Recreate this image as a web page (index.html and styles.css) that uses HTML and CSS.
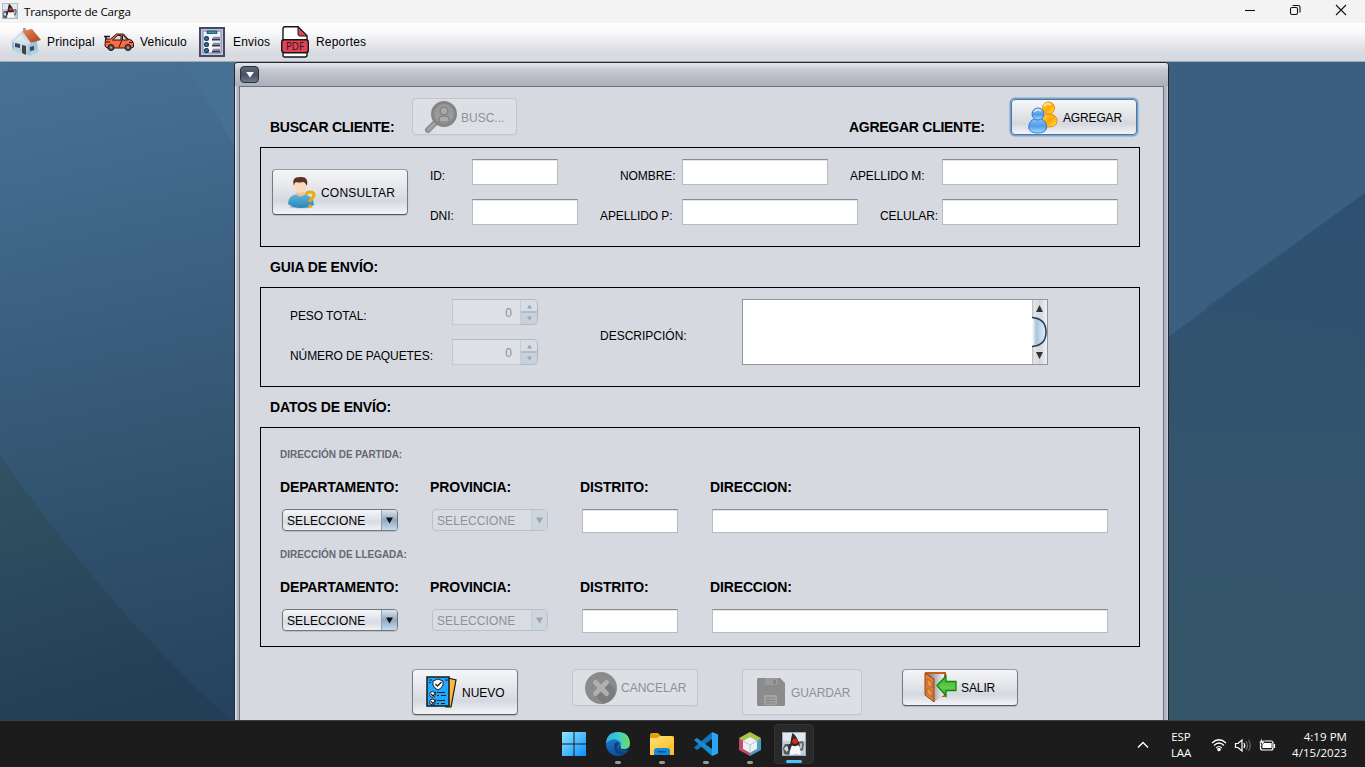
FILE: index.html
```html
<!DOCTYPE html>
<html lang="es">
<head>
<meta charset="utf-8">
<title>Transporte de Carga</title>
<link rel="stylesheet" href="styles.css">
</head>
<body>
<svg class="defs" width="0" height="0" aria-hidden="true">
  <defs>
    <linearGradient id="roof" x1="0" y1="0" x2="1" y2="1"><stop offset="0" stop-color="#e58a55"/><stop offset="1" stop-color="#a8431c"/></linearGradient>
    <linearGradient id="wall" x1="0" y1="0" x2="0" y2="1"><stop offset="0" stop-color="#f4f9fc"/><stop offset="1" stop-color="#9fc3dc"/></linearGradient>
    <linearGradient id="blueBody" x1="0" y1="0" x2="0" y2="1"><stop offset="0" stop-color="#8cc4f8"/><stop offset=".55" stop-color="#4f9ceb"/><stop offset="1" stop-color="#a5e0ff"/></linearGradient>
    <linearGradient id="goldBody" x1="0" y1="0" x2="1" y2="1"><stop offset="0" stop-color="#ffe04a"/><stop offset=".5" stop-color="#ffa800"/><stop offset="1" stop-color="#ffe35c"/></linearGradient>
    <linearGradient id="shirt" x1="0" y1="0" x2="0" y2="1"><stop offset="0" stop-color="#5fb4dc"/><stop offset="1" stop-color="#2b87b8"/></linearGradient>
    <linearGradient id="win" gradientUnits="userSpaceOnUse" x1="0" y1="0" x2="24" y2="24"><stop offset="0" stop-color="#8fe6ff"/><stop offset="1" stop-color="#0a8fff"/></linearGradient>
    <linearGradient id="edgeTop" x1="0" y1="0" x2="1" y2="0"><stop offset="0" stop-color="#2faee0"/><stop offset=".5" stop-color="#3fc9d0"/><stop offset="1" stop-color="#6fe05a"/></linearGradient>
    <linearGradient id="edgeLow" x1="0" y1="0" x2="0" y2="1"><stop offset="0" stop-color="#1c8ad8"/><stop offset="1" stop-color="#0c4fa3"/></linearGradient>
    <linearGradient id="folder" x1="0" y1="0" x2="1" y2="1"><stop offset="0" stop-color="#ffe07a"/><stop offset="1" stop-color="#fdbb1c"/></linearGradient>
    <linearGradient id="leaf" x1="0" y1="0" x2="0" y2="1"><stop offset="0" stop-color="#3fae2a"/><stop offset=".6" stop-color="#5fcf50"/><stop offset="1" stop-color="#2b9a1c"/></linearGradient>
    <linearGradient id="doorway" x1="0" y1="0" x2="1" y2="0"><stop offset="0" stop-color="#777"/><stop offset="1" stop-color="#f5f5f5"/></linearGradient>
    <symbol id="duke" viewBox="0 0 24 24">
      <rect width="24" height="24" fill="#c3ced9"/><path d="M0 0h24v9H0z" fill="#e2e8ee"/>
      <path d="M1 16l2-4 5 0 2-1v10l-4 2-4-1z" fill="#55595d"/><path d="M2 17l2-3 3 2-2 4z" fill="#d6dbdd"/>
      <path d="M16 10l5-1 1 3-1 6-4 2z" fill="#61666a"/><path d="M17 12l3-1v5l-3 1z" fill="#b9c1c6"/>
      <path d="M10.500 1c1.500 1 5.500 5 6.500 10l1 3-3 1H9l-1-2c1-4 1-8 2.500-12z" fill="#25292b"/>
      <path d="M9 13c2 1.500 5.500 1.500 7.500 0l2.500 7-1 3-4-1.500-4.500 1.500-2-1z" fill="#f8f8f8"/>
      <path d="M7 12l3 1-2 5-2-1z" fill="#2b2f31"/>
      <circle cx="13" cy="9.300" r="2.700" fill="#e7211b"/>
      <rect x=".5" y=".5" width="23" height="23" fill="none" stroke="#9aacbd"/>
    </symbol>
  </defs>
</svg>

<header class="titlebar">
  <svg class="titlebar-icon" width="16" height="16"><use href="#duke"/></svg>
  <span class="titlebar-text">Transporte de Carga</span>
  <svg class="window-controls" width="110" height="12" viewBox="0 0 110 12" fill="none" stroke="#111" stroke-width="1.100">
    <path d="M4 6.500h10"/>
    <rect x="49.500" y="3.500" width="7" height="7" rx="1.500"/><path d="M51.500 1.500h5.500a2 2 0 0 1 2 2v5"/>
    <path d="M95 1l10 10M105 1L95 11"/>
  </svg>
</header>

<nav class="menubar">
  <a class="menu menu-home">
    <svg width="32" height="30" viewBox="0 0 32 30">
      <path d="M13 1h3v6h-3z" fill="#8fa3b5"/>
      <path d="M2 14L12 6l7 11v11L4 22z" fill="url(#wall)"/>
      <path d="M18 16l9-3 1 12-9 4z" fill="#9cc3dc"/>
      <path d="M2 13l2 1v8l-2-1z" fill="#9cb8ca"/>
      <path d="M12 4l10-2 9 11-11 3z" fill="url(#roof)"/>
      <path d="M12 4L0 15l2 1 9-8 8 10 2-2z" fill="#cfdde8"/>
      <path d="M5 16l5 1v4l-5-1zM20 20l4-1v4l-4 1z" fill="#36485a"/><path d="M12 18l4 1v9l-4-2z" fill="#4d3d3a"/>
      <path d="M20 28l9-4v-2l-9 4zM2 23l9 4v-2l-9-4z" fill="#a9dcd9"/>
    </svg>Principal</a>
  <a class="menu menu-car">
    <svg width="30" height="20" viewBox="0 0 30 20" stroke="#1b1516" stroke-width="1">
      <path d="M1.500 7h5l6-5h7l4.500 5 4 1.500 1.500 3V15l-2 1H3l-2-2z" fill="#ff6a40"/><path d="M0 4.500h6M2 4.500V7" stroke-width="1.600"/>
      <path d="M8.500 8l5-4.500H17V8zM18.500 3.500h1l4 4.500h-5z" fill="#dcd8d8"/><path d="M18 8l-3 7M2 10h4M25 10.500h4" fill="none"/>
      <circle cx="7" cy="15.500" r="3" fill="#555"/><circle cx="24" cy="15.500" r="3" fill="#555"/><circle cx="7" cy="15.500" r="1" fill="#aaa" stroke="none"/><circle cx="24" cy="15.500" r="1" fill="#aaa" stroke="none"/>
    </svg>Vehiculo</a>
  <a class="menu menu-list">
    <svg width="26" height="30" viewBox="0 0 26 30">
      <rect x="1" y="1" width="24" height="28" fill="#c3c9de" stroke="#454862" stroke-width="2"/><rect x="4" y="4" width="18" height="22" fill="#f3f5fc" stroke="#7b80a0"/>
      <path d="M8 4h10v2.500H8z" fill="#16a4b4" stroke="#353750" stroke-width=".8"/>
      <g fill="#149cab" stroke="#252843" stroke-width="1.200"><circle cx="7.500" cy="11.500" r="1.900"/><circle cx="7.500" cy="17.500" r="1.900"/><circle cx="7.500" cy="23.500" r="1.900"/></g>
      <path d="M14 10.500h7M14 16.500h7M14 22.500h7" stroke="#858aa3" stroke-width="1.600"/><path d="M13 12.500h8M13 18.500h8M13 24.500h8" stroke="#35374f" stroke-width="1.800"/>
    </svg>Envios</a>
  <a class="menu menu-pdf">
    <svg width="28" height="32" viewBox="0 0 28 32">
      <path d="M4 .7h13l9 9V29q0 2-2 2H4q-2 0-2-2V3Q2 .7 4 .7z" fill="#fff" stroke="#161616" stroke-width="1.400"/>
      <path d="M17 1v7q0 2 2 2h7z" fill="#e04353" stroke="#161616"/>
      <rect x=".7" y="13.700" width="26.600" height="13" rx="2.500" fill="#e04353" stroke="#161616" stroke-width="1.400"/>
      <text x="14" y="24" text-anchor="middle" textLength="18" lengthAdjust="spacingAndGlyphs" class="pdf-label">PDF</text>
    </svg>Reportes</a>
</nav>

<main class="desktop">
  <svg class="wallpaper" width="1365" height="658" viewBox="0 62 1365 658" preserveAspectRatio="none">
    <defs>
      <linearGradient id="wl" gradientUnits="userSpaceOnUse" x1="40" y1="50" x2="190" y2="735"><stop offset="0" stop-color="#487295"/><stop offset=".18" stop-color="#426a8c"/><stop offset=".4" stop-color="#3a5e7e"/><stop offset=".6" stop-color="#325571"/><stop offset="1" stop-color="#25415d"/></linearGradient>
      <linearGradient id="wd" gradientUnits="userSpaceOnUse" x1="0" y1="455" x2="80" y2="720"><stop offset="0" stop-color="#325363"/><stop offset="1" stop-color="#233e55"/></linearGradient>
      <linearGradient id="wr" x1="0" y1="0" x2="0" y2="1"><stop offset="0" stop-color="#305271"/><stop offset="1" stop-color="#365669"/></linearGradient>
    </defs>
    <rect y="62" width="700" height="658" fill="url(#wl)"/>
    <path d="M184 62h60v100z" fill="#477194"/>
    <path d="M0 455Q100 600 230 720H0z" fill="url(#wd)"/>
    <rect x="700" y="62" width="665" height="658" fill="#3a5f81"/>
    <path d="M1160 343L1365 193V720H1160z" fill="url(#wr)"/>
    <path d="M1205 308Q1280 320 1365 336V193z" fill="#2f5272" opacity=".6"/>
    <path d="M1168 570Q1270 585 1365 607V720H1168z" fill="#365669" opacity=".6"/>
  </svg>

  <section class="frame">
    <div class="frame-title"><button class="frame-menu"><svg width="8" height="6"><path d="M0 0h8L4 5.500z" fill="#fff"/></svg></button></div>
    <div class="form">
      <div class="client-head">
        <h2 class="heading">BUSCAR CLIENTE:</h2>
        <button class="btn btn-search" disabled>
          <svg width="33" height="33" viewBox="0 0 33 33"><path d="M3 30l8-8" stroke="#8b8b8b" stroke-width="6" stroke-linecap="round"/><path d="M3 30l7-7" stroke="#a4a4a4" stroke-width="3" stroke-linecap="round"/><circle cx="19" cy="14" r="11.500" fill="#999" stroke="#858585" stroke-width="3"/><circle cx="19" cy="11" r="3.800" fill="#aaa" stroke="#7e7e7e" stroke-width="1.200"/><path d="M14 22v-3q0-3 5-3t5 3v3z" fill="#aaa" stroke="#7e7e7e" stroke-width="1.200"/></svg><span>BUSC...</span></button>
        <h2 class="heading heading-add">AGREGAR CLIENTE:</h2>
        <button class="btn btn-add">
          <svg width="31" height="33" viewBox="0 0 31 33"><g fill="url(#goldBody)" stroke="#ee9000"><path d="M13 23q0-9 7-10 9 0 9 7 0 6-9 6-6 0-7-3z"/><circle cx="20.500" cy="7" r="6"/></g><g fill="url(#blueBody)" stroke="#3978cc"><path d="M.7 27q0-9 9-10 9 1 9 10-1 5-9 5t-9-5z"/><circle cx="10" cy="13" r="6"/></g><path d="M16 5q3-4 7-1M6 11q3-4 7-1" fill="none" stroke="#fff" stroke-opacity=".6" stroke-width="2"/></svg><span>AGREGAR</span></button>
      </div>

      <div class="panel panel-client">
        <button class="btn btn-query">
          <svg width="29" height="33" viewBox="0 0 29 33"><ellipse cx="14" cy="31" rx="12" ry="1.500" fill="#b8bfc9"/><path d="M1 28q0-9 10-10h5q11 2 11 11-5 3-13 3T1 28z" fill="url(#shirt)"/><path d="M10 14h7v5q-4 3-7 0z" fill="#eebf9b"/><ellipse cx="13.500" cy="10" rx="5.700" ry="7" fill="#fbd9bd"/><path d="M7 10Q4 1 13 1q9-1 7 9-2-4-4-4-5 1-7 0-2 1-2 4z" fill="#593426"/><path d="M19 19q0-3 4-3 4 0 4 3 0 2-3 4-1 1-1 3" fill="none" stroke="#efaa0c" stroke-width="3"/><circle cx="23" cy="30" r="1.800" fill="#efaa0c"/></svg><span>CONSULTAR</span></button>
        <div class="client-fields">
          <div class="field-line">
            <label class="label w42">ID:</label><input class="input id-input">
            <label class="label w62 push62">NOMBRE:</label><input class="input name-input">
            <label class="label w92 push22">APELLIDO M:</label><input class="input long-input">
          </div>
          <div class="field-line">
            <label class="label w42">DNI:</label><input class="input dni-input">
            <label class="label w82 push22">APELLIDO P:</label><input class="input long-input">
            <label class="label w62 push22">CELULAR:</label><input class="input long-input">
          </div>
        </div>
      </div>

      <h2 class="heading section-heading">GUIA DE ENVÍO:</h2>
      <div class="panel panel-guide">
        <div class="guide-fields">
          <div class="field-line"><label class="label w162">PESO TOTAL:</label><div class="spinner"><span class="spin-value">0</span><span class="spin-buttons"><svg width="17" height="13"><path d="M6 8.500h5l-2.500-4z" fill="#9da4b1"/></svg><svg width="17" height="13"><path d="M6 3.500h5l-2.500 4z" fill="#9da4b1"/></svg></span></div></div>
          <div class="field-line"><label class="label w162">NÚMERO DE PAQUETES:</label><div class="spinner"><span class="spin-value">0</span><span class="spin-buttons"><svg width="17" height="13"><path d="M6 8.500h5l-2.500-4z" fill="#9da4b1"/></svg><svg width="17" height="13"><path d="M6 3.500h5l-2.500 4z" fill="#9da4b1"/></svg></span></div></div>
        </div>
        <label class="label desc-label">DESCRIPCIÓN:</label>
        <div class="textarea"><div class="scrollbar">
          <svg width="15" height="64" viewBox="0 0 15 64"><defs><linearGradient id="thumb"><stop offset="0" stop-color="#fff"/><stop offset=".3" stop-color="#a9c4dc"/><stop offset="1" stop-color="#e0f1ff"/></linearGradient></defs><path d="M4 12h7L7.500 5zM4 52h7L7.500 59z" fill="#333"/><path d="M0 17.500q14 1 14 14.500T0 46.500z" fill="url(#thumb)"/><path d="M0 17.500q14 1 14 14.500T0 46.500" fill="none" stroke="#263b52" stroke-width="1.500"/></svg>
        </div></div>
      </div>

      <h2 class="heading section-heading">DATOS DE ENVÍO:</h2>
      <div class="panel panel-address">
        <div class="address">
          <h3 class="caption">DIRECCIÓN DE PARTIDA:</h3>
          <div class="address-grid">
            <span class="heading">DEPARTAMENTO:</span><span class="heading">PROVINCIA:</span><span class="heading">DISTRITO:</span><span class="heading">DIRECCION:</span>
            <div class="combo"><span class="combo-text">SELECCIONE</span><span class="combo-arrow"><svg width="7" height="7"><path d="M0 .5h7l-3.500 6z"/></svg></span></div>
            <div class="combo combo-off"><span class="combo-text">SELECCIONE</span><span class="combo-arrow"><svg width="7" height="7"><path d="M0 .5h7l-3.500 6z"/></svg></span></div>
            <input class="input district-input"><input class="input street-input">
          </div>
        </div>
        <div class="address">
          <h3 class="caption">DIRECCIÓN DE LLEGADA:</h3>
          <div class="address-grid">
            <span class="heading">DEPARTAMENTO:</span><span class="heading">PROVINCIA:</span><span class="heading">DISTRITO:</span><span class="heading">DIRECCION:</span>
            <div class="combo"><span class="combo-text">SELECCIONE</span><span class="combo-arrow"><svg width="7" height="7"><path d="M0 .5h7l-3.500 6z"/></svg></span></div>
            <div class="combo combo-off"><span class="combo-text">SELECCIONE</span><span class="combo-arrow"><svg width="7" height="7"><path d="M0 .5h7l-3.500 6z"/></svg></span></div>
            <input class="input district-input"><input class="input street-input">
          </div>
        </div>
      </div>

      <div class="actions">
        <button class="btn btn-new">
          <svg width="31" height="32" viewBox="0 0 31 32"><path d="M22 2l8 2-5 27h-5z" fill="#fdb83d" stroke="#171717" stroke-width="1.200"/><path d="M1 1h22v29H1z" fill="#22a9fb" stroke="#121a20" stroke-width="1.500"/><path d="M12 3l5 2v4q-1 3-5 5-4-2-5-5V5z" fill="#fff" stroke="#16222c"/><path d="M9.500 8l2 2 4-4" fill="none" stroke="#16222c" stroke-width="1.300"/><g fill="#fff" stroke="#16222c"><circle cx="6.500" cy="18.500" r="2.800"/><circle cx="6.500" cy="26" r="2.800"/></g><path d="M5 18l2 2 3-4M5 25.500l2 2 3-4M11 16.500h8M11 19.500h2M15 19.500h5M11 24.500h8M11 27.500h2M15 27.500h4M3 4h3M3 6.500h2M19 4h3" fill="none" stroke="#16222c" stroke-width="1.200"/></svg><span>NUEVO</span></button>
        <button class="btn btn-cancel" disabled>
          <svg width="32" height="32" viewBox="0 0 32 32"><circle cx="16" cy="16" r="16" fill="#8b8b8b"/><path d="M22 9l9 9q-2 12-13 14l-8-9z" fill="#7c7c7c"/><path d="M10.500 10.500l11 11M21.500 10.500l-11 11" stroke="#b0b0b0" stroke-width="5" stroke-linecap="round"/></svg><span>CANCELAR</span></button>
        <button class="btn btn-save" disabled>
          <svg width="28" height="28" viewBox="0 0 28 28"><path d="M1 0h22l5 5v22l-1 1H1l-1-1V1z" fill="#8b8b8b"/><path d="M8 0h13v7H8z" fill="#999"/><path d="M16 2h3v4h-3z" fill="#858585"/><path d="M7 17h13v10H7z" fill="#a3a3a3"/><path d="M8.500 20h10M8.500 22.500h10M8.500 25h10M11 19v8" stroke="#888"/></svg><span>GUARDAR</span></button>
        <button class="btn btn-exit">
          <svg width="33" height="31" viewBox="0 0 33 31"><path d="M1 0h21v25h-6V3H1z" fill="#c75b1b"/><path d="M3 2h17v21l-10 7z" fill="url(#doorway)"/><path d="M1 1l9 6v23l-9-7z" fill="#df8038" stroke="#94400e"/><path d="M3 7l5 3v6l-5-3zM3 16l5 3v6l-5-4z" fill="#e99450" stroke="#ae551c" stroke-width=".7"/><path d="M13 13.500L22 4v5.500h10v9H22V24z" fill="url(#leaf)" stroke="#16870c" stroke-width="1.300"/></svg><span>SALIR</span></button>
      </div>
    </div>
  </section>
</main>

<footer class="taskbar">
  <div class="apps">
    <span class="app"><svg width="24" height="24"><path d="M0 0h11.500v11.500H0zM12.500 0H24v11.500H12.500zM0 12.500h11.500V24H0zM12.500 12.500H24V24H12.500z" fill="url(#win)"/></svg></span>
    <span class="app running"><svg width="24" height="24" viewBox="0 0 24 24"><circle cx="12" cy="12" r="12" fill="url(#edgeLow)"/><path d="M0 11Q1 0 12 0q11 0 12 11 0 6-7 6-4 0-3-3 2-2 0-4-5-6-14 1z" fill="url(#edgeTop)"/><path d="M8 13q-1 9 8 10 4-1 6-4-5 2-9-1-3-2-1-5 2-1 1-2-4-2-5 2z" fill="#123f80"/><path d="M15 14q-2 3 2 3.500 5 1 7-3v3q-5 2-9 0-3-1-1-3.500z" fill="#1c1c1c"/></svg></span>
    <span class="app running"><svg width="24" height="24" viewBox="0 0 24 24"><path d="M0 3q0-2 2-2h6l3 3h11q2 0 2 2v6H0z" fill="#e3a008"/><path d="M0 6h7l3-2h12q2 0 2 2v17H0z" fill="url(#folder)"/><path d="M4 23v-4q0-3 3-3h10q3 0 3 3v4z" fill="#1687d9"/><path d="M8 19h8v1.500H8z" fill="#0a5296"/></svg></span>
    <span class="app running"><svg width="24" height="24" viewBox="0 0 24 24"><path d="M18 0l6 2.500v19L18 24z" fill="#2aa7f2"/><path d="M18 0v7L3 18l-3-2.500z" fill="#1473bd"/><path d="M0 8l3-2 15 11v7z" fill="#198bd4"/></svg></span>
    <span class="app running"><svg width="22" height="24" viewBox="0 0 22 24"><path d="M11 0l11 6-3 4-8-4-8 4-3-4z" fill="#a8c34a"/><path d="M0 6l4 3v8l7 4v3L0 18z" fill="#c44a6a"/><path d="M22 6l-4 3v8l-7 4v3l11-6z" fill="#5199c6"/><path d="M11 5l7 4v8l-7 4-7-4V9z" fill="#eaf1f3"/><path d="M4 9l7 4 7-4M11 13v8" fill="none" stroke="#b8c5c9"/></svg></span>
    <span class="app active"><svg width="24" height="24"><use href="#duke"/></svg></span>
  </div>
  <div class="tray">
    <svg class="tray-up" width="12" height="8" fill="none" stroke="#fff" stroke-width="1.400"><path d="M1 6.500l5-5 5 5"/></svg>
    <div class="lang">ESP<br>LAA</div>
    <svg class="tray-icons" width="66" height="16" viewBox="0 0 66 16" fill="none" stroke="#fff" stroke-width="1.200">
      <path d="M1 6q7-6.500 14 0M3 8.500q5-5 10 0M5.200 11q2.800-3 5.600 0"/><circle cx="8" cy="12.500" r="1.200" fill="#fff"/>
      <path d="M24.500 6.500h2.500l4-3.500v11l-4-3.500h-2.500z"/><path d="M33 6q1.500 2.500 0 5"/><path d="M35 4q3 4.500 0 9M37.500 3q3.500 5.500 0 11" stroke="#666"/>
      <rect x="49.500" y="4" width="12.500" height="9" rx="2"/><path d="M52 6.500h8v4h-8z" fill="#fff"/><path d="M63.500 7v4"/><path d="M51 1l-3 5h3l-1 4 4-6h-3z" fill="#fff" stroke="#1c1c1c" stroke-width=".5"/>
    </svg>
    <div class="clock">4:19 PM<br>4/15/2023</div>
  </div>
</footer>
</body>
</html>
```

FILE: styles.css
```css
* { box-sizing: border-box; }
body { margin: 0; width: 1365px; height: 767px; overflow: hidden; display: flex; flex-direction: column; font: 12px "Liberation Sans", Arial, sans-serif; color: #000; }
svg { display: block; flex: none; }
.defs { position: absolute; }
h2, h3 { margin: 0; }

.titlebar { height: 23px; flex: none; background: #f3f3f3; display: flex; align-items: center; padding: 0 14px 1px 2px; }
.titlebar-text { margin-left: 6px; font: 11.6px "Open Sans", "Noto Sans", sans-serif; letter-spacing: -.2px; }
.window-controls { margin: 0 0 2px auto; }

.menubar { height: 39px; flex: none; display: flex; align-items: center; padding: 0 0 1px 10px; background: linear-gradient(#fff, #f9f9fa 25%, #d7dae0 80%); border-bottom: 1px solid #a3a8b0; }
.menu { display: flex; align-items: center; letter-spacing: .2px; line-height: 14px; padding-top: 1px; }
.menu-home { width: 94px; gap: 5px; }
.menu-car { width: 95px; gap: 6px; }
.menu-list { width: 82px; gap: 8px; }
.menu-pdf { gap: 7px; }
.pdf-label { font: 10.5px "Open Sans", sans-serif; letter-spacing: 0; fill: #30101a; }

.desktop { height: 658px; flex: none; position: relative; overflow: hidden; }
.wallpaper { position: absolute; left: 0; top: 0; }
.frame { position: relative; margin-left: 234px; width: 935px; height: 670px; border: 1px solid #22272e; border-radius: 4px 4px 0 0; background: linear-gradient(90deg, #e1e4e8 0, #e1e4e8 1px, #aeb3bf 2px, #aeb3bf 931px, #d0d3da 933px); padding: 0 4px; }
.frame-title { height: 23px; margin: 0 -4px; padding: 3px 0 0 5px; background: linear-gradient(#e6e8ec, #c6c9d1 30%, #abafba); border-radius: 3px 3px 0 0; }
.frame-menu { display: flex; align-items: center; justify-content: center; width: 19px; height: 17px; padding: 0; border: 1px solid #292f3a; border-radius: 4px; background: linear-gradient(#626a78, #475062 50%, #70798a); }
.form { border: 1px solid #6b7382; border-bottom: 0; height: 646px; background: #d6d9e0; padding-left: 20px; }

.heading { font-size: 14px; font-weight: 700; letter-spacing: -.14px; line-height: 16px; white-space: nowrap; }
.client-head { height: 60px; display: flex; align-items: flex-start; padding: 11px 0 0 10px; }
.client-head .heading { margin-top: 21px; width: 142px; letter-spacing: -.27px; }
.client-head .heading-add { width: 162px; margin-left: 332px; }
.section-heading { height: 40px; line-height: 40px; padding-left: 10px; }

.panel { width: 880px; border: 1px solid #000; display: flex; }
.panel-client { height: 100px; padding: 11px 0 0 11px; }
.panel-guide { height: 100px; padding: 11px 0 0 29px; align-items: flex-start; }
.panel-address { height: 220px; flex-direction: column; padding: 17px 0 0 19px; }

.btn { display: flex; align-items: center; justify-content: flex-start; flex: none; font: 12px "Liberation Sans", Arial, sans-serif; color: #000; padding: 0; border: 1px solid #777a80; border-bottom-color: #54575d; border-top-color: #989ba1; border-radius: 4px; background: linear-gradient(#f5f6f8, #e4e6ea 40%, #d5d8df 70%, #f2f4f8); box-shadow: 0 1px 1px #b6b9c0; }
.btn span { padding-top: 2px; }
.btn:disabled { color: #8e9197; border-color: #c2c5cc; background: #dce0e4; box-shadow: 0 1px 0 #d0d3d9; }
.btn-search { width: 105px; height: 37px; padding-left: 12px; gap: 3px; }
.btn-add { width: 126px; height: 36px; margin-top: 1px; padding-left: 16px; gap: 4px; box-shadow: 0 0 0 1.500px #75a2cf; border-color: #52779a; letter-spacing: -.15px; }
.btn-query { width: 136px; height: 46px; margin-top: 10px; padding-left: 14px; gap: 5px; letter-spacing: .2px; }

.client-fields { margin-left: 22px; display: flex; flex-direction: column; gap: 14px; }
.field-line { display: flex; height: 26px; }
.label { flex: none; line-height: 34px; white-space: nowrap; letter-spacing: -.08px; }
.w42 { width: 42px; } .w62 { width: 62px; } .w82 { width: 82px; } .w92 { width: 92px; } .w162 { width: 162px; }
.push22 { margin-left: 22px; } .push62 { margin-left: 62px; }
.input { flex: none; height: 26px; border: 1px solid #b9bbc0; border-top: 1px solid #8a8c91; border-radius: 0; background: #fff; box-shadow: inset 0 1px 0 #e4e5e7; padding: 0 4px; }
.id-input { width: 86px; } .dni-input { width: 106px; } .name-input { width: 146px; } .long-input { width: 176px; }
.district-input { width: 96px; height: 24px; } .street-input { width: 396px; height: 24px; }

.guide-fields { display: flex; flex-direction: column; gap: 14px; width: 310px; }
.spinner { display: flex; width: 86px; height: 26px; color: #8e9197; }
.spin-value { width: 69px; border: 1px solid #c7cad0; border-top-color: #b7bac0; background: #dde0e4; text-align: right; line-height: 27px; padding-right: 8px; }
.spin-buttons { width: 17px; border: 1px solid #afb9c7; border-left: 0; border-radius: 0 5px 5px 0; background: linear-gradient(#d7dde5 47%, #afb9c7 48%, #afb9c7 52%, #c9d1dc 53%); overflow: hidden; }
.desc-label { width: 142px; line-height: 74px; letter-spacing: 0; }
.textarea { width: 306px; height: 66px; border: 1px solid #9396a0; background: #fff; display: flex; justify-content: flex-end; }
.scrollbar { width: 15px; background: linear-gradient(90deg, #b5b7bc 0, #e4e5e8 2px, #d5d7dc 8px, #f2f2f4); }

.address { height: 100px; }
.caption { font-size: 10px; line-height: 20px; color: #66696e; white-space: nowrap; font-weight: 700; letter-spacing: -.02px; }
.address-grid { display: grid; grid-template-columns: 150px 150px 130px 400px; grid-template-rows: 30px 24px; padding-top: 14px; }
.address-grid .combo, .address-grid .input { margin-left: 2px; }
.combo { display: flex; width: 116px; height: 22px; border: 1px solid #72757c; border-radius: 4px; overflow: hidden; background: linear-gradient(#f7f7f9, #d8dbe1 60%, #f0f2f5); box-shadow: 0 1px 1px #b9bcc3; }
.combo-text { width: 98px; padding-left: 4px; line-height: 22px; letter-spacing: .1px; }
.combo-arrow { flex: 1; display: flex; align-items: center; justify-content: center; background: linear-gradient(#dce5ee, #91a9c0 50%, #c2dcf0); border-left: 1px solid #8ba0b5; fill: #111; }
.combo-off { color: #8e9197; background: #d9dce2; border-color: #bbc0ca; box-shadow: none; }
.combo-off .combo-arrow { background: #cdd5df; border-color: #c2cad5; fill: #9ba3b1; }

.actions { display: flex; align-items: flex-start; padding: 22px 0 0 152px; }
.btn-new { width: 106px; height: 46px; padding-left: 13px; gap: 5px; }
.btn-cancel { width: 126px; height: 37px; margin-left: 54px; padding-left: 12px; gap: 4px; }
.btn-save { width: 120px; height: 46px; margin-left: 44px; padding-left: 14px; gap: 6px; letter-spacing: -.1px; }
.btn-cancel span, .btn-exit span { padding-top: 0; }
.btn-exit { width: 116px; height: 37px; margin-left: 40px; padding-left: 21px; gap: 4px; letter-spacing: -.1px; }

.taskbar { height: 47px; flex: none; background: #1c1c1c; border-top: 1px solid #3e4042; display: flex; justify-content: space-between; color: #fff; }
.apps { margin-left: 554px; display: flex; gap: 4px; padding-top: 3px; }
.app { position: relative; width: 40px; height: 40px; display: flex; align-items: center; justify-content: center; border-radius: 4px; }
.app.active { background: #292929; border: 1px solid #323232; }
.running::after, .active::after { content: ""; position: absolute; bottom: 0; left: 17px; width: 6px; height: 3px; border-radius: 2px; background: #999; }
.active::after { left: 11px; width: 16px; background: #4cc2ff; }
.tray { display: flex; align-items: center; font: 11.5px/16px "Open Sans", "Noto Sans", sans-serif; padding: 1px 18px 0 0; letter-spacing: 0; }
.lang { width: 30px; text-align: center; margin-left: 17px; letter-spacing: -.1px; }
.tray-icons { margin-left: 15px; }
.clock { width: 70px; text-align: right; letter-spacing: .05px; }
```
